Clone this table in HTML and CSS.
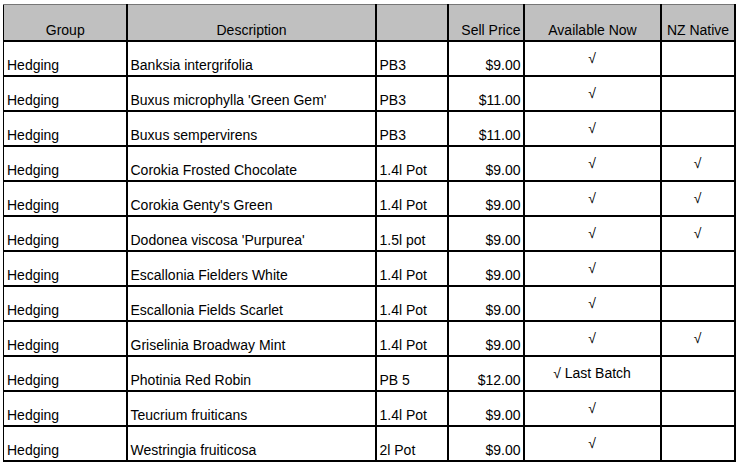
FILE: index.html
```html
<!DOCTYPE html>
<html>
<head>
<meta charset="utf-8">
<link rel="stylesheet" href="styles.css">
</head>
<body>
<table class="sheet">
  <colgroup>
    <col class="c-group"><col class="c-desc"><col class="c-size"><col class="c-price"><col class="c-avail"><col class="c-nz">
  </colgroup>
  <thead>
    <tr class="head-row">
      <th class="center">Group</th>
      <th class="center">Description</th>
      <th></th>
      <th class="right">Sell Price</th>
      <th class="center">Available Now</th>
      <th class="center">NZ Native</th>
    </tr>
  </thead>
  <tbody>
    <tr><td>Hedging</td><td>Banksia intergrifolia</td><td>PB3</td><td class="right">$9.00</td><td class="mid">√</td><td class="mid"></td></tr>
    <tr><td>Hedging</td><td>Buxus microphylla 'Green Gem'</td><td>PB3</td><td class="right">$11.00</td><td class="mid">√</td><td class="mid"></td></tr>
    <tr><td>Hedging</td><td>Buxus sempervirens</td><td>PB3</td><td class="right">$11.00</td><td class="mid">√</td><td class="mid"></td></tr>
    <tr><td>Hedging</td><td>Corokia Frosted Chocolate</td><td>1.4l Pot</td><td class="right">$9.00</td><td class="mid">√</td><td class="mid">√</td></tr>
    <tr><td>Hedging</td><td>Corokia Genty's Green</td><td>1.4l Pot</td><td class="right">$9.00</td><td class="mid">√</td><td class="mid">√</td></tr>
    <tr><td>Hedging</td><td>Dodonea viscosa 'Purpurea'</td><td>1.5l pot</td><td class="right">$9.00</td><td class="mid">√</td><td class="mid">√</td></tr>
    <tr><td>Hedging</td><td>Escallonia Fielders White</td><td>1.4l Pot</td><td class="right">$9.00</td><td class="mid">√</td><td class="mid"></td></tr>
    <tr><td>Hedging</td><td>Escallonia Fields Scarlet</td><td>1.4l Pot</td><td class="right">$9.00</td><td class="mid">√</td><td class="mid"></td></tr>
    <tr><td>Hedging</td><td>Griselinia Broadway Mint</td><td>1.4l Pot</td><td class="right">$9.00</td><td class="mid">√</td><td class="mid">√</td></tr>
    <tr><td>Hedging</td><td>Photinia Red Robin</td><td>PB 5</td><td class="right">$12.00</td><td class="mid">√ Last Batch</td><td class="mid"></td></tr>
    <tr><td>Hedging</td><td>Teucrium fruiticans</td><td>1.4l Pot</td><td class="right">$9.00</td><td class="mid">√</td><td class="mid"></td></tr>
    <tr><td>Hedging</td><td>Westringia fruiticosa</td><td>2l Pot</td><td class="right">$9.00</td><td class="mid">√</td><td class="mid"></td></tr>
  </tbody>
</table>
</body>
</html>
```
FILE: styles.css
```css
html, body {
  margin: 0;
  padding: 0;
  background: #ffffff;
}
body {
  padding: 4px 0 0 3px;
  font-family: "Liberation Sans", Arial, sans-serif;
  font-size: 14px;
  color: #000000;
}
.sheet {
  border-collapse: collapse;
  table-layout: fixed;
  width: 731px;
}
.c-group { width: 123px; }
.c-desc { width: 249px; }
.c-size { width: 72px; }
.c-price { width: 76px; }
.c-avail { width: 137px; }
.c-nz { width: 74px; }
.sheet tr {
  height: 35px;
}
.sheet tr.head-row {
  height: 36px;
}
.sheet th,
.sheet td {
  border: 1px solid #000000;
  padding: 0 2px 2px 3px;
  vertical-align: bottom;
  text-align: left;
  white-space: nowrap;
  overflow: hidden;
  line-height: 16px;
}
.sheet th {
  background: #c0c0c0;
  font-weight: normal;
  border-width: 2px 2px 2px 2px;
  border-top: 1px solid #777777;
}
.sheet td {
  border-width: 1px 2px 2px 2px;
}
.sheet td:first-child,
.sheet th:first-child {
  border-left-width: 1px;
}
.sheet .center { text-align: center; }
.sheet .right { text-align: right; }
.sheet td.mid {
  text-align: center;
  vertical-align: middle;
  padding: 0 2px 0 2px;
}
```
